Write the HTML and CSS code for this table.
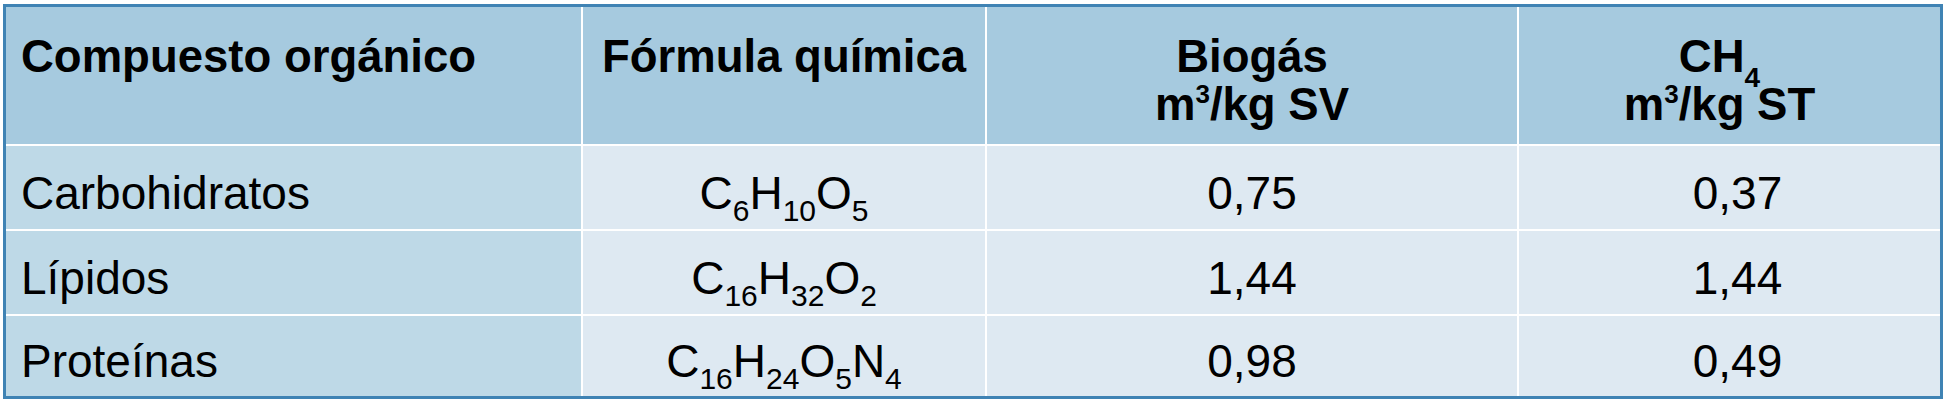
FILE: index.html
```html
<!DOCTYPE html>
<html lang="es">
<head>
<meta charset="utf-8">
<title>Compuestos orgánicos</title>
<link rel="stylesheet" href="styles.css">
</head>
<body>
<table class="tabla">
  <thead>
    <tr>
      <th class="c1">Compuesto orgánico</th>
      <th class="c2">Fórmula química</th>
      <th class="c3">Biogás<br>m<span class="sup">3</span>/kg SV</th>
      <th class="c4">CH<span class="sub-h">4</span><br>m<span class="sup">3</span>/kg ST</th>
    </tr>
  </thead>
  <tbody>
    <tr class="r1">
      <td class="c1">Carbohidratos</td>
      <td class="c2">C<span class="sub">6</span>H<span class="sub">10</span>O<span class="sub">5</span></td>
      <td class="c3">0,75</td>
      <td class="c4">0,37</td>
    </tr>
    <tr class="r2">
      <td class="c1">Lípidos</td>
      <td class="c2">C<span class="sub">16</span>H<span class="sub">32</span>O<span class="sub">2</span></td>
      <td class="c3">1,44</td>
      <td class="c4">1,44</td>
    </tr>
    <tr class="r3">
      <td class="c1">Proteínas</td>
      <td class="c2">C<span class="sub">16</span>H<span class="sub">24</span>O<span class="sub">5</span>N<span class="sub">4</span></td>
      <td class="c3">0,98</td>
      <td class="c4">0,49</td>
    </tr>
  </tbody>
</table>
</body>
</html>
```
FILE: styles.css
```css
html, body {
  margin: 0;
  padding: 0;
  background: #ffffff;
}

body {
  padding: 4px 1px 0 3px;
  font-family: "Liberation Sans", Arial, Helvetica, sans-serif;
  color: #000;
}

.tabla {
  width: 1940px;
  border-collapse: separate;
  border-spacing: 0;
  border: 3px solid #3f83b4;
  table-layout: fixed;
}

.tabla th,
.tabla td {
  padding: 0;
  border-left: 2px solid #ffffff;
  border-top: 2px solid #ffffff;
}

.tabla th.c1,
.tabla td.c1 {
  border-left: none;
  width: 575px;
}

.tabla thead th {
  border-top: none;
}

.c2 { width: 404px; }
.c3 { width: 532px; }

.tabla th {
  height: 137px;
  box-sizing: border-box;
  background: #a6cadf;
  font-weight: bold;
  font-size: 45.5px;
  line-height: 48px;
  vertical-align: top;
  text-align: center;
  padding-top: 26px;
}

.tabla th.c1 {
  text-align: left;
  padding-left: 15px;
}

.tabla th.c4 {
  padding-right: 20px;
}

.tabla td {
  background: #dee9f2;
  font-size: 46px;
  line-height: 46px;
  text-align: center;
  vertical-align: middle;
  padding-top: 10px;
}

.tabla td.c1 {
  background: #bed9e7;
  text-align: left;
  padding-left: 15px;
}

.tabla td.c4 {
  padding-left: 16px;
}

.r1 td { height: 85px; box-sizing: border-box; }
.r2 td { height: 85px; box-sizing: border-box; }
.r3 td { height: 82px; box-sizing: border-box; }

.sub {
  font-size: 30px;
  line-height: 0;
  vertical-align: -12px;
}

.sup {
  font-size: 26px;
  line-height: 0;
  vertical-align: 17px;
}

.sub-h {
  font-size: 28px;
  line-height: 0;
  vertical-align: -15px;
}
```
